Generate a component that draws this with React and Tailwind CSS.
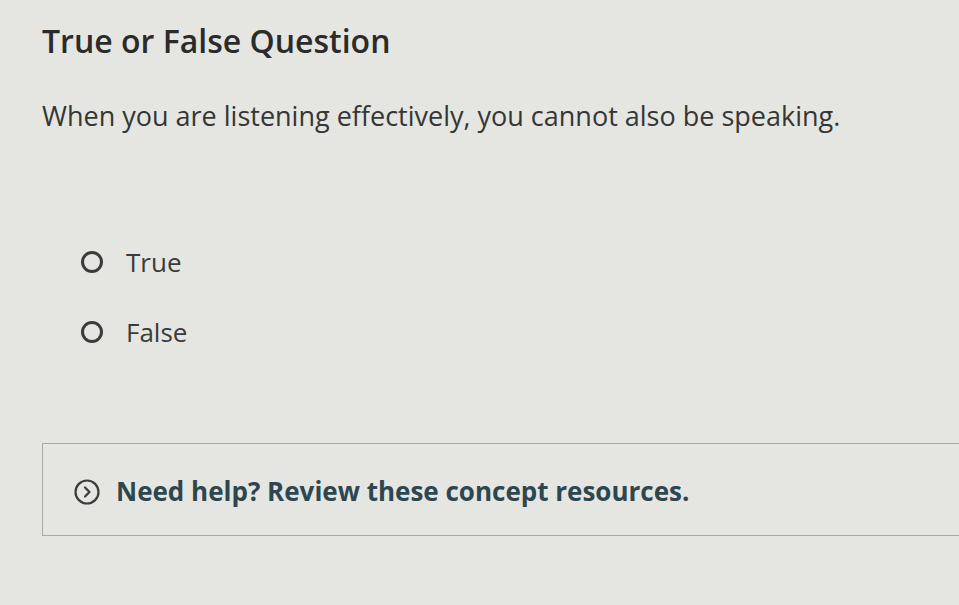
export default function App() {
  return (
    <div className="w-[959px] h-[605px] overflow-hidden bg-[#e5e6e1] text-[#2e2f2e]" style={{ fontFamily: "'Open Sans', Lato, sans-serif" }}>
      <div className="pl-[42px] pt-[22px]">
        <h1 className="text-[32px] leading-[38px] font-semibold text-[#2a2b2a]">True or False Question</h1>
        <p className="mt-[39px] text-[27px] leading-[34px] text-[#353635]">When you are listening effectively, you cannot also be speaking.</p>
        <div className="mt-[114px] flex flex-col gap-[40px] pl-[39px]">
          <label className="flex items-center gap-[23px] text-[26px] leading-[30px] text-[#3a3b3a]">
            <span className="w-[22px] h-[22px] rounded-full border-[3px] border-[#3a3b3a]" />
            True
          </label>
          <label className="flex items-center gap-[23px] text-[26px] leading-[30px] text-[#3a3b3a]">
            <span className="w-[22px] h-[22px] rounded-full border-[3px] border-[#3a3b3a]" />
            False
          </label>
        </div>
        <div className="mt-[96px] h-[93px] border border-r-0 border-[#a9aaa6] flex items-center pl-[30px] gap-[15px] pt-[4px]">
          <svg width="28" height="28" viewBox="0 0 28 28" fill="none" stroke="#3a3d3c" strokeWidth="2.2">
            <circle cx="14" cy="14" r="11.5" />
            <path d="M12 9.5 L16.5 14 L12 18.5" strokeLinecap="round" strokeLinejoin="round" />
          </svg>
          <span className="text-[26px] font-bold text-[#2d4650]">Need help? Review these concept resources.</span>
        </div>
      </div>
    </div>
  );
}
